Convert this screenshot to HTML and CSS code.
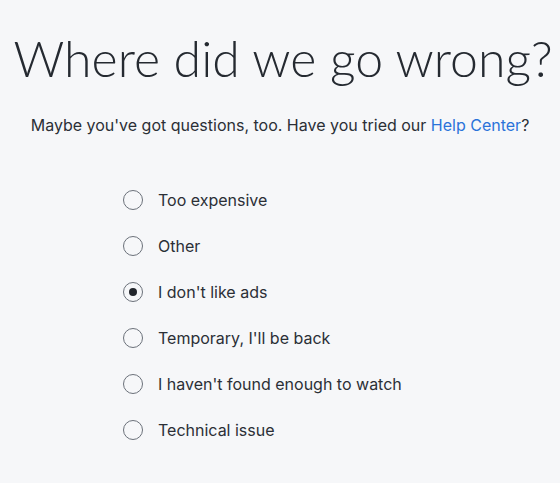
FILE: index.html
```html
<!DOCTYPE html>
<html lang="en">
<head>
<meta charset="utf-8">
<link rel="stylesheet" href="styles.css">
</head>
<body>
<main class="page">
  <h1 class="title">Where did we go wrong?</h1>
  <p class="subtitle">Maybe you've got questions, too. Have you tried our <a class="link" href="#">Help Center</a>?</p>
  <ul class="options">
    <li class="option"><span class="radio"></span><span class="label">Too expensive</span></li>
    <li class="option"><span class="radio"></span><span class="label">Other</span></li>
    <li class="option"><span class="radio radio--checked"></span><span class="label">I don't like ads</span></li>
    <li class="option"><span class="radio"></span><span class="label">Temporary, I'll be back</span></li>
    <li class="option"><span class="radio"></span><span class="label">I haven't found enough to watch</span></li>
    <li class="option"><span class="radio"></span><span class="label">Technical issue</span></li>
  </ul>
</main>
</body>
</html>
```
FILE: styles.css
```css
html, body {
  margin: 0;
  padding: 0;
  background: #f6f7f9;
}
body {
  font-family: Inter, "Noto Sans", sans-serif;
  color: #2b2f36;
}
.page {
  display: flex;
  flex-direction: column;
  align-items: center;
  padding-top: 26px;
}
.title {
  margin: 0 0 0 6px;
  font-family: Lato, "Liberation Sans", sans-serif;
  font-size: 50px;
  font-weight: 300;
  line-height: 64px;
  white-space: nowrap;
  color: #252a31;
}
.subtitle {
  margin: 23px 0 0;
  font-size: 16px;
  line-height: 24px;
  color: #2b2f36;
}
.link {
  color: #2a73d9;
  text-decoration: none;
}
.options {
  list-style: none;
  margin: 40px 0 0;
  padding: 0 0 0 123px;
  align-self: stretch;
}
.option {
  display: flex;
  align-items: center;
  height: 46px;
  gap: 15px;
}
.radio {
  box-sizing: border-box;
  width: 20px;
  height: 20px;
  border: 1.5px solid #6b717a;
  border-radius: 50%;
  display: flex;
  align-items: center;
  justify-content: center;
  flex: none;
}
.radio--checked::after {
  content: "";
  width: 8px;
  height: 8px;
  border-radius: 50%;
  background: #22262c;
}
.label {
  font-size: 16px;
  line-height: 24px;
  color: #2b2f36;
}
```
